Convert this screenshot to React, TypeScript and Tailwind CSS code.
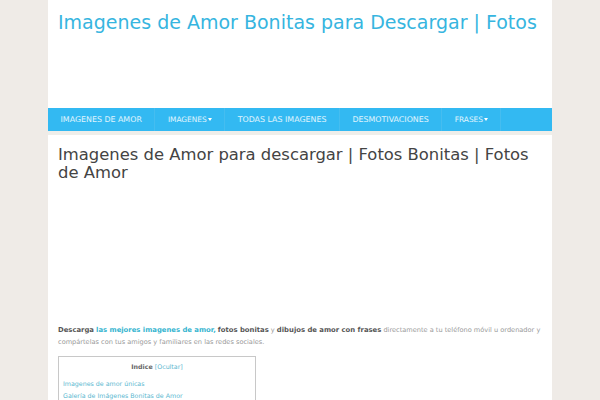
const navItems = [
  { label: 'IMAGENES DE AMOR', caret: false },
  { label: 'IMAGENES', caret: true },
  { label: 'TODAS LAS IMAGENES', caret: false },
  { label: 'DESMOTIVACIONES', caret: false },
  { label: 'FRASES', caret: true },
];

export default function App() {
  return (
    <div className="h-[400px] overflow-hidden bg-[#efebe7] font-['DejaVu_Sans',sans-serif]">
      <div className="mx-auto h-full w-[504px] bg-white">
        {/* Header */}
        <header className="h-[108px] px-[10px] pt-[9px]">
          <h1 className="whitespace-nowrap text-[19px] leading-[27px] text-[#36b5e0]">
            Imagenes de Amor Bonitas para Descargar | Fotos
          </h1>
        </header>

        {/* Nav */}
        <nav className="flex h-[23px] bg-[#33b9f2]">
          {navItems.map((item) => (
            <a
              key={item.label}
              className="flex items-center border-r border-[#45bdf0] px-[12.5px] text-[7.9px] text-white/85"
            >
              <span className={item.caret ? 'text-[7.4px]' : undefined}>{item.label}</span>
              {item.caret && (
                <span className="ml-px h-0 w-0 border-x-[2.5px] border-t-[3px] border-x-transparent border-t-white" />
              )}
            </a>
          ))}
        </nav>
        <div className="h-1 bg-[#efeeea]" />

        {/* Post */}
        <main className="px-[10px] pt-[11px]">
          <h2 className="text-[16.4px] leading-[18px] text-[#444444]">
            Imagenes de Amor para descargar | Fotos Bonitas | Fotos de Amor
          </h2>
          <p className="mt-[142px] text-[6.6px] leading-[12px] text-[#999999]">
            <strong className="text-[6.85px] text-[#555555]">Descarga</strong>{' '}
            <strong className="text-[6.85px] text-[#36b5d0]">las mejores imagenes de amor,</strong>{' '}
            <strong className="text-[6.85px] text-[#555555]">fotos bonitas</strong> y{' '}
            <strong className="text-[6.85px] text-[#555555]">dibujos de amor con frases</strong> directamente a tu
            teléfono móvil u ordenador y compártelas con tus amigos y familiares en las redes sociales.
          </p>

          {/* Table of contents */}
          <div className="mt-[8px] w-[198px] border border-[#c8c8c8] px-1 pt-[5px] text-[6.3px]">
            <p className="text-center text-[#666666]">
              <span className="font-semibold">Indice</span> <span className="text-[#5bb8d0]">[Ocultar]</span>
            </p>
            <ul className="mt-[8px] space-y-[2px] text-[#5bb8d0]">
              <li>Imagenes de amor únicas</li>
              <li>Galería de Imágenes Bonitas de Amor</li>
            </ul>
          </div>
        </main>
      </div>
    </div>
  );
}
